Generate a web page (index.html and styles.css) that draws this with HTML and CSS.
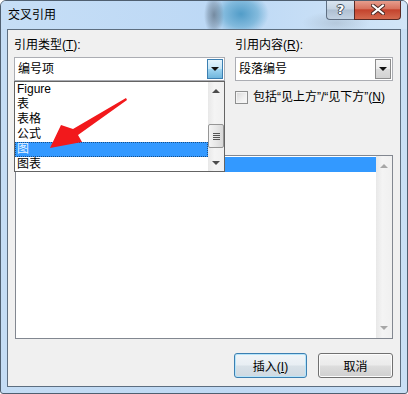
FILE: index.html
```html
<!DOCTYPE html>
<html lang="zh-CN">
<head>
  <meta charset="UTF-8" />
  <meta name="viewport" content="width=device-width, initial-scale=1.0" />
  <title>交叉引用</title>
  <link rel="stylesheet" href="styles.css">
</head>
<body>
  <div class="window">
    <div class="titlebar">
      <span class="title">交叉引用</span>
      <div class="caption-buttons">
        <div class="cap-btn cap-help">?</div>
        <div class="cap-btn cap-close">
          <svg width="14" height="11" viewBox="0 0 14 11">
            <path d="M2 1.5 L12 9.5 M12 1.5 L2 9.5" stroke="#4a2a26" stroke-width="4" stroke-linecap="square" fill="none"/>
            <path d="M2 1.5 L12 9.5 M12 1.5 L2 9.5" stroke="#ffffff" stroke-width="2" stroke-linecap="square" fill="none"/>
          </svg>
        </div>
      </div>
    </div>

    <div class="client">
      <div class="top-row">
        <div class="field field-type">
          <div class="label">引用类型(<u>T</u>):</div>
          <div class="combo">
            <span class="combo-text">编号项</span>
            <span class="combo-btn active"><i class="tri"></i></span>
          </div>
          <div class="dropdown">
            <ul class="options">
              <li>Figure</li>
              <li>表</li>
              <li>表格</li>
              <li>公式</li>
              <li class="selected">图</li>
              <li>图表</li>
            </ul>
            <div class="vscroll">
              <span class="sb-arrow up"></span>
              <span class="sb-thumb"><i></i><i></i><i></i><i></i></span>
              <span class="sb-arrow down"></span>
            </div>
          </div>
        </div>

        <div class="field field-content">
          <div class="label">引用内容(<u>R</u>):</div>
          <div class="combo">
            <span class="combo-text">段落编号</span>
            <span class="combo-btn"><i class="tri"></i></span>
          </div>
          <label class="check"><span class="box"></span><span class="check-text">包括“见上方”/“见下方”(<u>N</u>)</span></label>
        </div>
      </div>

      <div class="listbox">
        <ul class="items">
          <li class="selected"></li>
        </ul>
        <div class="vscroll disabled">
          <span class="sb-arrow up"></span>
          <span class="sb-arrow down"></span>
        </div>
      </div>

      <div class="buttons">
        <button class="btn default">插入(<u>I</u>)</button>
        <button class="btn cancel">取消</button>
      </div>
    </div>

    <svg class="arrow" width="408" height="394" viewBox="0 0 408 394">
      <polygon points="126,98 127,100 78,135 82,142 50,148 61,125 73,129" fill="#f2191c"/>
    </svg>
  </div>
</body>
</html>
```

FILE: styles.css
```css
* {
  box-sizing: border-box;
}
body {
  margin: 0;
  padding: 0;
  font-family: "Liberation Sans", "Noto Sans CJK SC", sans-serif;
  font-size: 12px;
  color: #000;
  background-color: #ffffff;
}
ul {
  list-style: none;
  margin: 0;
  padding: 0;
}

/* window frame */
.window {
  position: relative;
  width: 408px;
  height: 394px;
  border: 1px solid #4f5f70;
  border-radius: 6px 6px 3px 3px;
  background: linear-gradient(to right, #c4dcf4, #bfd9f4 60%, #c9dff5);
  overflow: hidden;
}
.titlebar {
  display: flex;
  align-items: flex-start;
  height: 28px;
  padding-right: 6px;
  background:
    radial-gradient(ellipse 10px 20px at 213px 14px, rgba(100, 120, 140, 0.8), rgba(100, 120, 140, 0.4) 60%, transparent),
    radial-gradient(ellipse 28px 22px at 240px 13px, rgba(70, 150, 195, 0.9), rgba(90, 165, 205, 0.6) 60%, transparent),
    radial-gradient(ellipse 34px 12px at 335px 22px, rgba(150, 165, 180, 0.4), transparent),
    linear-gradient(to right, #c6def6, #bcd8f5 55%, #d2e5f7);
}
.title {
  padding-left: 7px;
  line-height: 28px;
  font-size: 12px;
}
.caption-buttons {
  display: flex;
  margin-left: auto;
  margin-top: -1px;
}
.cap-btn {
  height: 20px;
  display: flex;
  align-items: center;
  justify-content: center;
  border: 1px solid #5f6f82;
  border-top: none;
}
.cap-help {
  width: 28px;
  border-right: none;
  border-radius: 0 0 0 4px;
  background: linear-gradient(#dce7f2, #c5d4e3 48%, #aebfd1 52%, #c3d3e3);
  color: #fff;
  font-family: "DejaVu Sans", sans-serif;
  font-weight: bold;
  font-size: 13px;
  text-shadow: 1px 0 0 #3d4a58, -1px 0 0 #3d4a58, 0 1px 0 #3d4a58, 0 -1px 0 #3d4a58;
}
.cap-close {
  width: 47px;
  border-color: #5a2a24;
  border-radius: 0 0 4px 0;
  background: linear-gradient(#e8a393, #d8735f 45%, #c4432d 52%, #d46a4f);
}

/* client area */
.client {
  width: 394px;
  height: 358px;
  margin: 0 6px 6px 6px;
  border: 1px solid #5d6e80;
  background-color: #f0f0f0;
  padding: 8px 7px 0 6px;
}
.top-row {
  display: flex;
  gap: 10px;
}
.field {
  position: relative;
}
.field-type {
  width: 211px;
}
.field-content {
  width: 158px;
}
.label {
  height: 14px;
  line-height: 14px;
  margin-bottom: 5px;
}
.combo {
  display: flex;
  height: 24px;
  border: 1px solid #abadb3;
  background-color: #fff;
  padding: 1px;
}
.combo-text {
  flex: 1;
  line-height: 20px;
  padding-left: 2px;
}
.combo-btn {
  width: 16px;
  display: flex;
  align-items: center;
  justify-content: center;
  border: 1px solid #8c8c8c;
  background: linear-gradient(#f5f5f5, #ececec 48%, #dcdcdc 52%, #d2d2d2);
}
.combo-btn.active {
  border-color: #3c7fb1;
  background: linear-gradient(#e5f4fc, #c6e6f7 48%, #9fd4f0 52%, #6fb6dd);
}
.tri {
  width: 0;
  height: 0;
  border-left: 4px solid transparent;
  border-right: 4px solid transparent;
  border-top: 4px solid #111;
}

/* drop-down list, open over the dialog */
.dropdown {
  position: absolute;
  top: 43px;
  left: 0;
  width: 211px;
  height: 91px;
  display: flex;
  border: 1px solid #646464;
  background-color: #fff;
  z-index: 2;
}
.options {
  flex: 1;
}
.options li, .items li {
  height: 15px;
  line-height: 15px;
  padding-left: 2px;
  white-space: nowrap;
}
.options li.selected {
  background-color: #3399ff;
  color: #e8f4ff;
  outline: 1px dotted #1a4f86;
  outline-offset: -1px;
}
.vscroll {
  width: 16px;
  display: flex;
  flex-direction: column;
  background: linear-gradient(to right, #e8e8e8, #f4f4f4 40%, #f0f0f0);
}
.sb-arrow {
  height: 17px;
  display: flex;
  align-items: center;
  justify-content: center;
}
.sb-arrow::before {
  content: "";
  width: 0;
  height: 0;
  border-left: 4px solid transparent;
  border-right: 4px solid transparent;
}
.sb-arrow.up::before {
  border-bottom: 4px solid #4c4c4c;
}
.sb-arrow.down {
  margin-top: auto;
}
.sb-arrow.down::before {
  border-top: 4px solid #4c4c4c;
}
.sb-thumb {
  height: 24px;
  margin: 25px 0 0 0;
  border: 1px solid #969696;
  border-radius: 2px;
  background: linear-gradient(to right, #f4f4f4, #e8e8e8 50%, #d8d8d8);
  display: flex;
  flex-direction: column;
  justify-content: center;
  align-items: center;
  gap: 1px;
}
.sb-thumb i {
  width: 7px;
  height: 1px;
  background-color: #555;
}
.vscroll.disabled .sb-arrow.up::before {
  border-bottom-color: #a7a7a7;
}
.vscroll.disabled .sb-arrow.down::before {
  border-top-color: #a7a7a7;
}
.vscroll.disabled .sb-arrow.up {
  height: 20px;
}
.vscroll.disabled .sb-arrow.down {
  height: 20px;
}

/* main list */
.listbox {
  display: flex;
  width: 378px;
  height: 184px;
  margin: 51px 0 0 1px;
  border: 1px solid #828790;
  background-color: #fff;
}
.items {
  flex: 1;
  padding-top: 1px;
}
.items li.selected {
  background-color: #3399ff;
}

/* buttons */
.buttons {
  display: flex;
  justify-content: flex-end;
  gap: 11px;
  margin-top: 14px;
}
.btn {
  height: 25px;
  padding: 0;
  font-family: "Liberation Sans", "Noto Sans CJK SC", sans-serif;
  font-size: 12px;
  color: #000;
  border: 1px solid #707070;
  border-radius: 3px;
  background: linear-gradient(#f2f2f2, #ebebeb 48%, #dddddd 52%, #cfcfcf);
  box-shadow: inset 0 0 0 1px #fcfcfc;
}
.btn.default {
  width: 73px;
  border-color: #3c7fb1;
  box-shadow: inset 0 0 0 1px #b5e4fa;
  background: linear-gradient(#f1f5f8, #e8eef3 48%, #d8e1e8 52%, #cfd9e1);
}
.btn.cancel {
  width: 75px;
}

/* red annotation arrow lying over the dialog */
.arrow {
  position: absolute;
  top: -1px;
  left: -1px;
  pointer-events: none;
  z-index: 3;
}

.check {
  display: flex;
  align-items: center;
  gap: 5px;
  height: 14px;
  line-height: 14px;
  margin-top: 9px;
  white-space: nowrap;
}
.check .box {
  flex: none;
  width: 13px;
  height: 13px;
  border: 1px solid #8e8f8f;
  background: linear-gradient(135deg, #d8d8d8, #f0f0f0 60%, #fafafa);
  box-shadow: inset 0 0 0 1px #f4f4f4;
}
```
